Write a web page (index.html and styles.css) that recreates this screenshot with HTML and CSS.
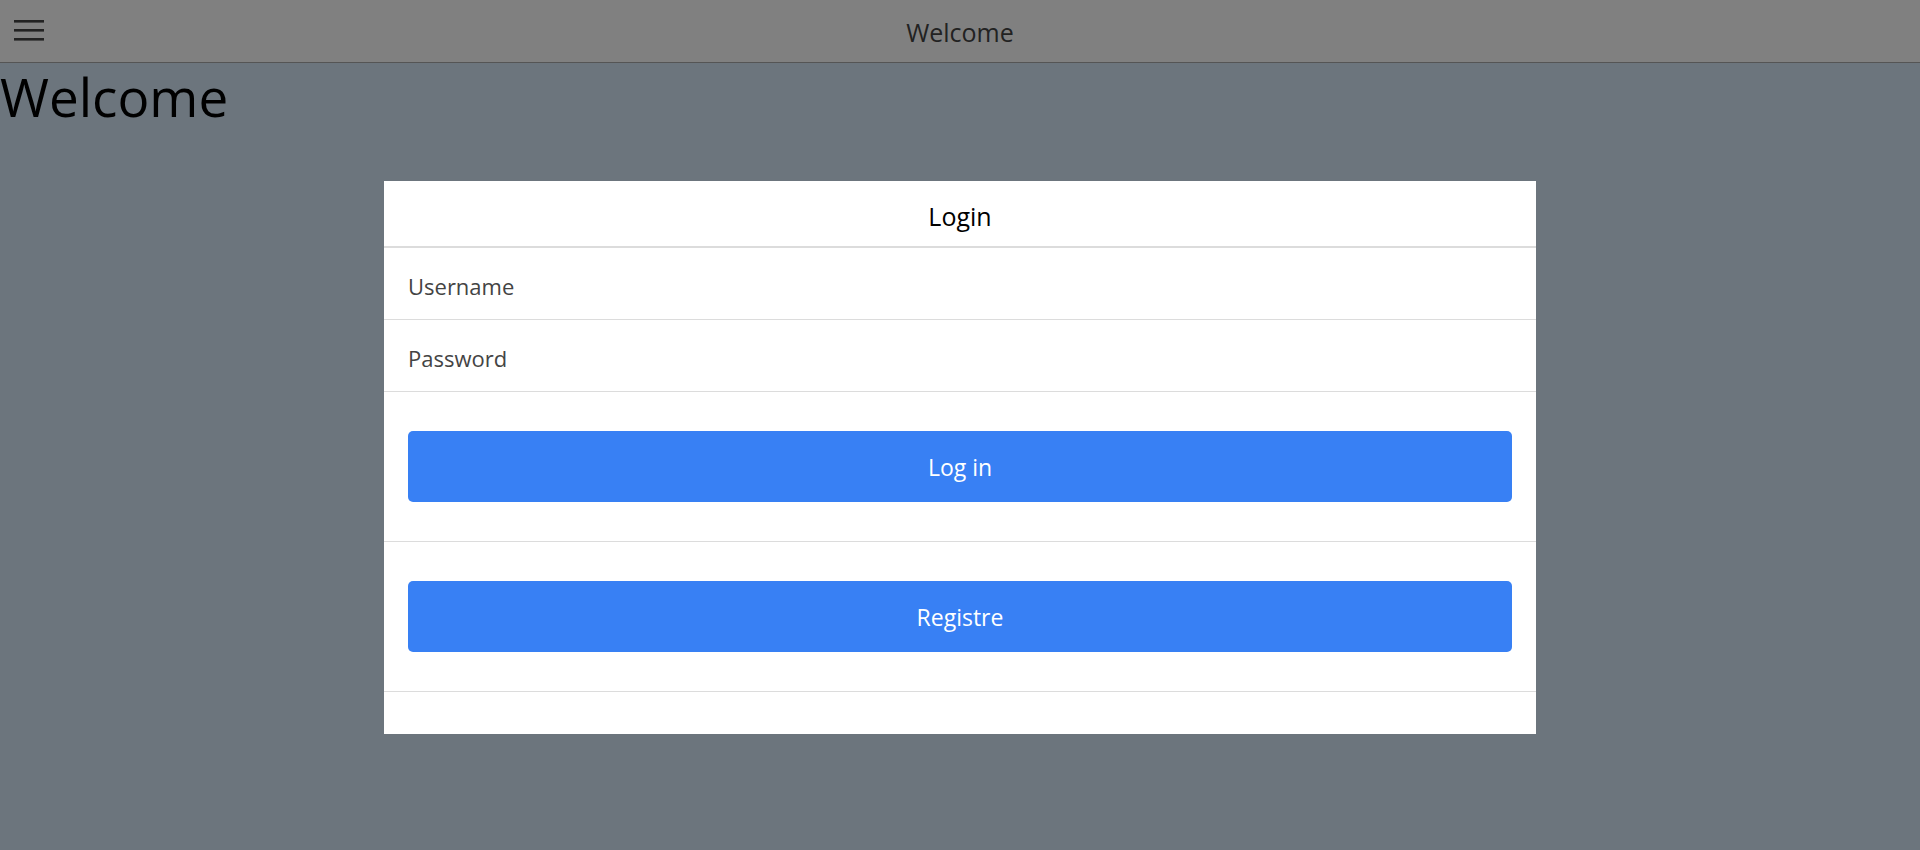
FILE: index.html
```html
<!DOCTYPE html>
<html lang="en">
<head>
<meta charset="utf-8">
<title>Welcome</title>
<link rel="stylesheet" href="styles.css">
</head>
<body>
<header class="topbar">
  <button class="menu-btn" aria-label="Menu">
    <svg width="30" height="22" viewBox="0 0 30 22" aria-hidden="true">
      <rect x="0" y="0" width="30" height="2.6" fill="#222"/>
      <rect x="0" y="9" width="30" height="2.6" fill="#222"/>
      <rect x="0" y="18" width="30" height="2.6" fill="#222"/>
    </svg>
  </button>
  <div class="topbar-title">Welcome</div>
</header>
<main class="content">
  <h1 class="page-title">Welcome</h1>
  <section class="card">
    <div class="card-header">Login</div>
    <div class="field">Username</div>
    <div class="field">Password</div>
    <div class="action"><button class="btn">Log in</button></div>
    <div class="action"><button class="btn">Registre</button></div>
    <div class="card-footer"></div>
  </section>
</main>
</body>
</html>
```
FILE: styles.css
```css
* { box-sizing: border-box; }
html, body { height: 100%; }
body {
  margin: 0;
  background: #6c757d;
  font-family: "Open Sans", "Noto Sans", sans-serif;
  color: #000;
}
.topbar {
  position: relative;
  height: 63px;
  background: #808080;
  border-bottom: 1px solid #555;
  display: flex;
  align-items: center;
  justify-content: center;
}
.menu-btn {
  position: absolute;
  left: 14px;
  top: 20px;
  padding: 0;
  margin: 0;
  border: 0;
  background: transparent;
  line-height: 0;
}
.topbar-title {
  font-size: 25px;
  color: #222;
  font-weight: 500;
  padding-top: 2px;
}
.content { padding: 0; }
.page-title {
  margin: 0;
  font-size: 53px;
  font-weight: 400;
  line-height: 36px;
  padding-top: 16px;
  padding-bottom: 29px;
  color: #000;
}
.card {
  width: 60%;
  margin: 37px auto 0;
  background: #fff;
}
.card-header {
  height: 67px;
  border-bottom: 2px solid #dcdcdc;
  display: flex;
  align-items: center;
  justify-content: center;
  padding-top: 4px;
  font-size: 25px;
  color: #000;
}
.field {
  height: 72px;
  border-bottom: 1px solid #dcdcdc;
  display: flex;
  align-items: center;
  padding-left: 24px;
  padding-top: 4px;
  font-size: 22px;
  color: #444;
}
.action {
  padding: 39px 24px;
  border-bottom: 1px solid #dcdcdc;
}
.btn {
  display: block;
  width: 100%;
  height: 71px;
  border: 0;
  border-radius: 5px;
  background: #3880f4;
  color: #fff;
  font-family: inherit;
  font-size: 23px;
}
.card-footer { height: 42px; }
```
